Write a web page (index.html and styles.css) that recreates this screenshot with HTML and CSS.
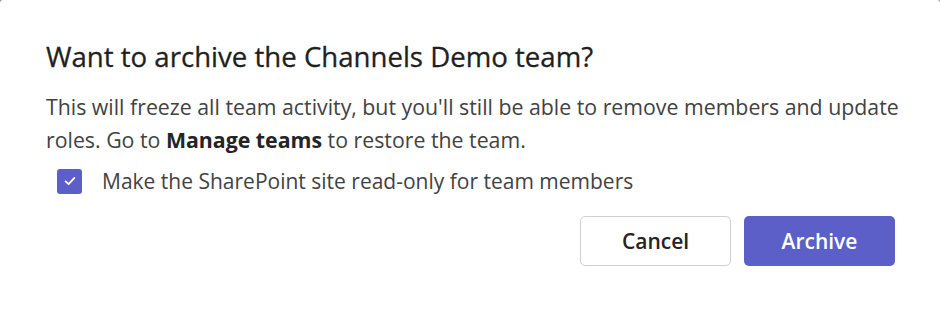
FILE: index.html
```html
<!DOCTYPE html>
<html lang="en">
<head>
    <meta charset="UTF-8">
    <title>Archive team</title>
    <link rel="stylesheet" href="styles.css">
</head>
<body>
    <div class="dialog">
        <h1 class="dialog-title">Want to archive the Channels Demo team?</h1>
        <p class="dialog-text">This will freeze all team activity, but you'll still be able to remove members and update roles. Go to <strong>Manage teams</strong> to restore the team.</p>

        <label class="check-row">
            <span class="check-box">
                <svg width="14" height="14" viewBox="0 0 14 14">
                    <path d="M2.6 7.4 L5.6 10.1 L11.4 3.9" fill="none" stroke="#fff" stroke-width="1.8" stroke-linecap="round" stroke-linejoin="round"/>
                </svg>
            </span>
            <span class="check-label">Make the SharePoint site read-only for team members</span>
        </label>

        <div class="actions">
            <button class="btn btn-secondary">Cancel</button>
            <button class="btn btn-primary">Archive</button>
        </div>
    </div>
</body>
</html>
```

FILE: styles.css
```css
html, body {
    margin: 0;
    height: 100%;
    background: #8a8a8a;
}
body {
    font-family: "Open Sans", "Noto Sans", sans-serif;
    color: #242424;
}
.dialog {
    background: #fff;
    height: 313px;
    box-sizing: border-box;
    padding: 39px 20px 0 46px;
    border-radius: 3px 3px 0 0;
}
.dialog-title {
    margin: 0;
    font-size: 27.6px;
    font-weight: 400;
    line-height: 34px;
    color: #1f1f1f;
    -webkit-text-stroke: 0.3px #1f1f1f;
}
.dialog-text {
    margin: 17px 0 0;
    font-size: 21.3px;
    line-height: 33px;
    color: #424242;
}
.dialog-text strong {
    color: #242424;
    font-weight: 700;
}
.check-row {
    display: flex;
    align-items: center;
    gap: 20px;
    margin: 10px 0 0 11px;
    font-size: 21px;
    line-height: 30px;
    color: #424242;
}
.check-box {
    width: 25px;
    height: 25px;
    border-radius: 3px;
    background: #5b5fc7;
    display: flex;
    align-items: center;
    justify-content: center;
}
.actions {
    display: flex;
    justify-content: flex-end;
    gap: 13px;
    margin-top: 20px;
    padding-right: 25px;
}
.btn {
    width: 151px;
    height: 50px;
    border-radius: 5px;
    font-family: "Open Sans", "Noto Sans", sans-serif;
    font-size: 21px;
    font-weight: 600;
    cursor: pointer;
}
.btn-secondary {
    background: #fff;
    border: 1px solid #d1d1d1;
    color: #242424;
}
.btn-primary {
    background: #5b5fc7;
    border: none;
    color: #fff;
}
```
